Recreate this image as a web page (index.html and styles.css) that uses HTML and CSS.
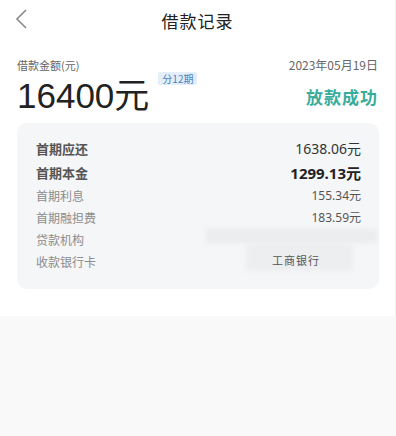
FILE: index.html
```html
<!DOCTYPE html>
<html lang="zh-CN">
<head>
    <meta charset="UTF-8">
    <title>借款记录</title>
    <link rel="stylesheet" href="styles.css">
</head>
<body>

<div class="page">
    <div class="topbar">
        <span class="back">
            <svg width="14" height="22" viewBox="0 0 14 22"><path d="M12 2 L3 11 L12 20" fill="none" stroke="#8a8a8a" stroke-width="1.6"/></svg>
        </span>
        <span class="title">借款记录</span>
    </div>

    <div class="summary">
        <div class="sum-left">
            <div class="label">借款金额(元)</div>
            <div class="amount-row">
                <span class="amount">16400元</span>
                <span class="tag">分12期</span>
            </div>
        </div>
        <div class="sum-right">
            <div class="date">2023年05月19日</div>
            <div class="status">放款成功</div>
        </div>
    </div>

    <div class="card">
        <div class="row strong">
            <span>首期应还</span><span class="val v1">1638.06元</span>
        </div>
        <div class="row strong">
            <span>首期本金</span><span class="val v2">1299.13元</span>
        </div>
        <div class="row">
            <span>首期利息</span><span class="val">155.34元</span>
        </div>
        <div class="row">
            <span>首期融担费</span><span class="val">183.59元</span>
        </div>
        <div class="masked">
            <div class="masked-labels">
                <div class="row"><span>贷款机构</span></div>
                <div class="row"><span>收款银行卡</span></div>
            </div>
            <div class="mosaic">
                <div class="m1"></div>
                <div class="m2"></div>
                <div class="bank">工商银行</div>
            </div>
        </div>
    </div>
</div>

<div class="rest"></div>

</body>
</html>
```

FILE: styles.css
```css
body {
  margin: 0;
  background: #f9f9f9;
  font-family: "Noto Sans CJK SC", "Noto Sans", sans-serif;
  color: #333;
}
.page {
  background: #fff;
  height: 316px;
  border-right: 1px solid #f0f0f0;
}
.topbar {
  position: relative;
  height: 40px;
  display: flex;
  align-items: center;
  justify-content: center;
}
.back {
  position: absolute;
  left: 14px;
  top: 8px;
}
.title {
  font-size: 17px;
  color: #222;
  letter-spacing: 1px;
}
.summary {
  display: flex;
  justify-content: space-between;
  padding: 17px 17px 0 17px;
  height: 60px;
}
.label {
  font-size: 11px;
  color: #666;
  line-height: 16px;
}
.amount-row {
  display: flex;
  align-items: flex-start;
  margin-top: 3px;
}
.amount {
  font-family: "Liberation Sans", "Noto Sans CJK SC", sans-serif;
  font-size: 35px;
  color: #222;
  line-height: 40px;
}
.tag {
  margin-left: 9px;
  margin-top: -4px;
  background: #e4eef9;
  color: #4a80c2;
  font-size: 10px;
  line-height: 13px;
  padding: 0 4px;
  border-radius: 2px;
}
.sum-right {
  text-align: right;
}
.date {
  font-size: 12px;
  color: #666;
  line-height: 16px;
}
.status {
  margin-top: 11px;
  font-size: 17px;
  font-weight: bold;
  color: #3aac9c;
  letter-spacing: 1px;
}
.card {
  margin: 6px 16px 0 17px;
  background: #f5f6f8;
  border-radius: 10px;
  padding: 13px 18px 17px 19px;
}
.row {
  display: flex;
  justify-content: space-between;
  align-items: center;
  height: 22px;
  font-size: 12px;
  color: #8c8c8c;
}
.row.strong {
  font-size: 13px;
  font-weight: bold;
  color: #555;
  height: 24px;
}
.val {
  font-family: "Noto Sans", "Noto Sans CJK SC", sans-serif;
  font-size: 12px;
  color: #555;
  font-weight: normal;
}
.v1 {
  font-size: 14px;
  color: #333;
}
.v2 {
  font-size: 15px;
  font-weight: bold;
  color: #222;
}
.masked {
  display: flex;
}
.masked-labels {
  width: 150px;
}
.mosaic {
  position: relative;
  flex: 1;
  height: 44px;
}
.m1 {
  position: absolute;
  left: 20px;
  right: -16px;
  top: 1px;
  height: 14px;
  background: #ebecee;
  filter: blur(2px);
}
.m2 {
  position: absolute;
  left: 60px;
  right: 8px;
  top: 15px;
  height: 28px;
  background: #eceef0;
  filter: blur(2px);
}
.bank {
  position: absolute;
  left: 86px;
  top: 24px;
  font-size: 11px;
  color: #555;
  letter-spacing: 1px;
}
.rest {
  height: 120px;
}
```
